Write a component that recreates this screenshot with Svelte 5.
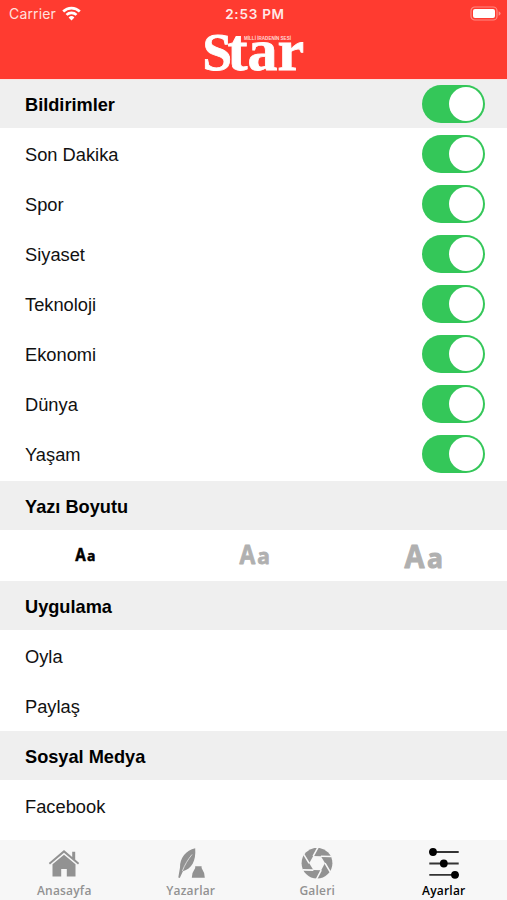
<script lang="ts">
  interface Topic {
    name: string;
    enabled: boolean;
  }

  let topics: Topic[] = $state([
    { name: "Son Dakika", enabled: true },
    { name: "Spor", enabled: true },
    { name: "Siyaset", enabled: true },
    { name: "Teknoloji", enabled: true },
    { name: "Ekonomi", enabled: true },
    { name: "Dünya", enabled: true },
    { name: "Yaşam", enabled: true },
  ]);
  let notifications = $state(true);

  const sizes = ["small", "medium", "large"];
  let currentSize = $state("small");

  const tabs = ["Anasayfa", "Yazarlar", "Galeri", "Ayarlar"];
  let currentTab = $state("Ayarlar");
</script>

{#snippet toggle(on: boolean, label: string, onclick: () => void)}
  <button class="switch" class:on role="switch" aria-checked={on} aria-label={label} {onclick}>
    <span class="knob"></span>
  </button>
{/snippet}

<div class="screen">
  <header>
    <div class="status">
      <div class="carrier">
        <span>Carrier</span>
        <svg width="19" height="15" viewBox="0 0 19 15">
          <g fill="none" stroke="#fff" stroke-width="2.6">
            <path d="M1.2 5.5a11.8 11.8 0 0 1 16.6 0" />
            <path d="M4.5 8.9a7.1 7.1 0 0 1 10 0" />
          </g>
          <path d="M9.5 14.5 6.6 11.5a4.1 4.1 0 0 1 5.8 0z" fill="#fff" />
        </svg>
      </div>
      <span class="time">2:53 PM</span>
      <svg class="battery" width="31" height="15" viewBox="0 0 31 15">
        <rect x="1" y="1" width="26" height="13" rx="3.8" fill="none" stroke="#ff8a83" stroke-width="1.2" />
        <rect x="3" y="3" width="22" height="9" rx="2" fill="#fff" />
        <path d="M28.6 5.2q2 .8 2 2.3t-2 2.3z" fill="#ff8a83" />
      </svg>
    </div>
    <svg class="logo" width="104" height="44" viewBox="0 0 104 44">
      <text class="logo-name" x="0.5" y="39">S<tspan class="logo-tail" x="25.5">tar</tspan></text>
      <text class="logo-motto" x="42" y="8.5" textLength="47" lengthAdjust="spacingAndGlyphs">MİLLİ İRADENİN SESİ</text>
    </svg>
  </header>

  <main>
    <div class="section first">
      <h2>Bildirimler</h2>
      {@render toggle(notifications, "Bildirimler", () => (notifications = !notifications))}
    </div>
    <div class="rows topics">
      {#each topics as topic}
        <div class="row">
          <span>{topic.name}</span>
          {@render toggle(topic.enabled, topic.name, () => (topic.enabled = !topic.enabled))}
        </div>
      {/each}
    </div>

    <div class="section"><h2>Yazı Boyutu</h2></div>
    <div class="sizes">
      {#each sizes as size}
        <button class={["size", size]} class:active={size === currentSize} aria-label={size} onclick={() => (currentSize = size)}>
          <svg viewBox="0 0 38 28">
            <text x="0.5" y="25.5" textLength="20" lengthAdjust="spacingAndGlyphs">A</text>
            <text class="lower" x="23" y="25.5" textLength="16" lengthAdjust="spacingAndGlyphs">a</text>
          </svg>
        </button>
      {/each}
    </div>

    <div class="section"><h2>Uygulama</h2></div>
    <div class="rows">
      <div class="row"><span>Oyla</span></div>
      <div class="row"><span>Paylaş</span></div>
    </div>

    <div class="section"><h2>Sosyal Medya</h2></div>
    <div class="rows">
      <div class="row"><span>Facebook</span></div>
    </div>
  </main>

  <nav>
    {#each tabs as tab}
      <button class="tab" class:active={tab === currentTab} onclick={() => (currentTab = tab)}>
        <svg width="34" height="34" viewBox="0 0 34 34">
          {#if tab === "Anasayfa"}
            <path d="M17 2 1.8 14.9l1.2 1.5L17 4.8l14 11.6 1.2-1.5-4-3.4V3.7h-3v5.2z" />
            <path d="M17 6.7 5.5 16.2v12.4h8.7v-7.7h5.6v7.7h8.7V16.2z" />
          {:else if tab === "Yazarlar"}
            <path d="M21.2.3C12 2.5 5.8 10 6 19.4L4.3 29.4l1.5.6 3.1-6.8c8.7-2.1 13.3-10.2 12.3-22.9z" />
            <path d="M18 6.5C14 11.5 10.5 17 8.4 23" fill="none" stroke="#f7f7f7" stroke-width=".7" />
            <path d="M21.2 18.3h6.4v1.6q3.2 4.6 3.2 9.8H17.8q0-5.2 3.4-9.8z" />
          {:else if tab === "Galeri"}
            <circle cx="17" cy="15.2" r="15.4" />
            <path d="m13.2 8.1 7.7.2 4.1 6.8-3.8 7.1-7.8-.1-4.2-6.8z" fill="#f7f7f7" />
            <g stroke="#f7f7f7" stroke-width="1.6">
              <path d="M13.2 8.1 18.2-1M20.9 8.3l10.2.2M25 15.1l5.3 9M21.2 22.2l-4.9 9.3M13.4 22.1 3 21.9M9.2 15.3 3.6 6.2" />
            </g>
          {:else}
            <path d="M2.3 4h29.4M2.3 15.5h29.4M2.3 26.8h29.4" fill="none" stroke="#333" stroke-width="1.8" />
            <circle cx="6" cy="4" r="3.9" />
            <circle cx="16.8" cy="15.5" r="3.9" />
            <circle cx="28" cy="26.8" r="3.9" />
          {/if}
        </svg>
        <span>{tab}</span>
      </button>
    {/each}
  </nav>
</div>

<style>
  :global(body) {
    background: #fff;
  }

  .screen {
    display: flex;
    flex-direction: column;
    width: 100%;
    height: 900px;
    overflow: hidden;
    background: #fff;
    color: #111;
    font: 18.3px/24px "Liberation Sans", Arial, sans-serif;
  }

  button {
    padding: 0;
    border: none;
    background: none;
    font: inherit;
    cursor: pointer;
  }

  svg {
    display: block;
  }

  header {
    flex: none;
    display: flex;
    flex-direction: column;
    align-items: center;
    box-sizing: border-box;
    height: 79px;
    background: #ff3b30;
    color: #fff;
  }

  .status {
    display: grid;
    grid-template-columns: 1fr auto 1fr;
    align-items: center;
    box-sizing: border-box;
    width: 100%;
    height: 27px;
    padding: 0 6px 0 9px;
    font: 14px/16px Inter, "Liberation Sans", sans-serif;
  }

  .carrier {
    display: flex;
    align-items: center;
    gap: 6px;
    color: #ffe0de;
    letter-spacing: 0.15px;
  }

  .time {
    color: #ffe9e7;
    font-weight: 600;
    font-size: 13.5px;
    letter-spacing: 0.75px;
  }

  .battery {
    justify-self: end;
  }

  .logo {
    margin-top: 4px;
    overflow: visible;
  }

  .logo-name {
    fill: #fff;
    stroke: #fff;
    stroke-width: 0.8px;
    font: bold 53px "Liberation Serif", serif;
  }

  .logo-tail {
    font-size: 60px;
  }

  .logo-motto {
    fill: #ffd8d5;
    font: bold 4.5px "Liberation Sans", sans-serif;
  }

  main {
    flex: 1;
    min-height: 0;
    overflow: hidden;
  }

  .section,
  .row {
    display: flex;
    align-items: center;
    justify-content: space-between;
    box-sizing: border-box;
    padding: 0 22px 0 25px;
  }

  .section {
    height: 49px;
    padding-top: 2px;
    background: #efefef;
  }

  .section.first {
    border-top: 1px solid #fbe3e1;
    padding-top: 0;
  }

  .section.first h2,
  .row > span {
    padding-top: 2px;
  }

  h2 {
    margin: 0;
    color: #000;
    font-size: 18.2px;
    font-weight: bold;
  }

  .rows {
    padding-top: 1px;
  }

  .rows.topics {
    padding: 1px 0 2px;
  }

  .row {
    height: 50px;
  }

  .switch {
    display: flex;
    align-items: center;
    box-sizing: border-box;
    width: 63px;
    height: 38px;
    padding: 2px;
    border-radius: 19px;
    background: #e9e9ea;
  }

  .switch.on {
    justify-content: flex-end;
    background: #34c759;
  }

  .knob {
    width: 34px;
    height: 34px;
    border-radius: 50%;
    background: #fff;
  }

  .sizes {
    display: grid;
    grid-template-columns: repeat(3, 1fr);
    height: 51px;
  }

  .size {
    display: flex;
    align-items: center;
    justify-content: center;
  }

  .size svg {
    width: 38px;
    overflow: visible;
    fill: #b0b0b0;
    stroke: #b0b0b0;
    stroke-width: 1px;
    stroke-linejoin: round;
    font: bold 33px "Open Sans", sans-serif;
  }

  .size .lower {
    font-size: 27px;
  }

  .size.medium svg {
    width: 30px;
  }

  .size.small svg {
    width: 20px;
  }

  .size.active svg {
    fill: #000;
    stroke: #000;
  }

  nav {
    flex: none;
    display: grid;
    grid-template-columns: repeat(4, 1fr);
    box-sizing: border-box;
    height: 60px;
    padding-left: 1px;
    background: #f7f7f7;
  }

  .tab {
    display: flex;
    flex-direction: column;
    align-items: center;
    padding-top: 8px;
    color: #929292;
    fill: currentColor;
    font: 600 12px/16px "Open Sans", sans-serif;
    letter-spacing: 0.2px;
  }

  .tab span {
    margin-top: 1px;
  }

  .tab.active {
    color: #000;
  }
</style>
